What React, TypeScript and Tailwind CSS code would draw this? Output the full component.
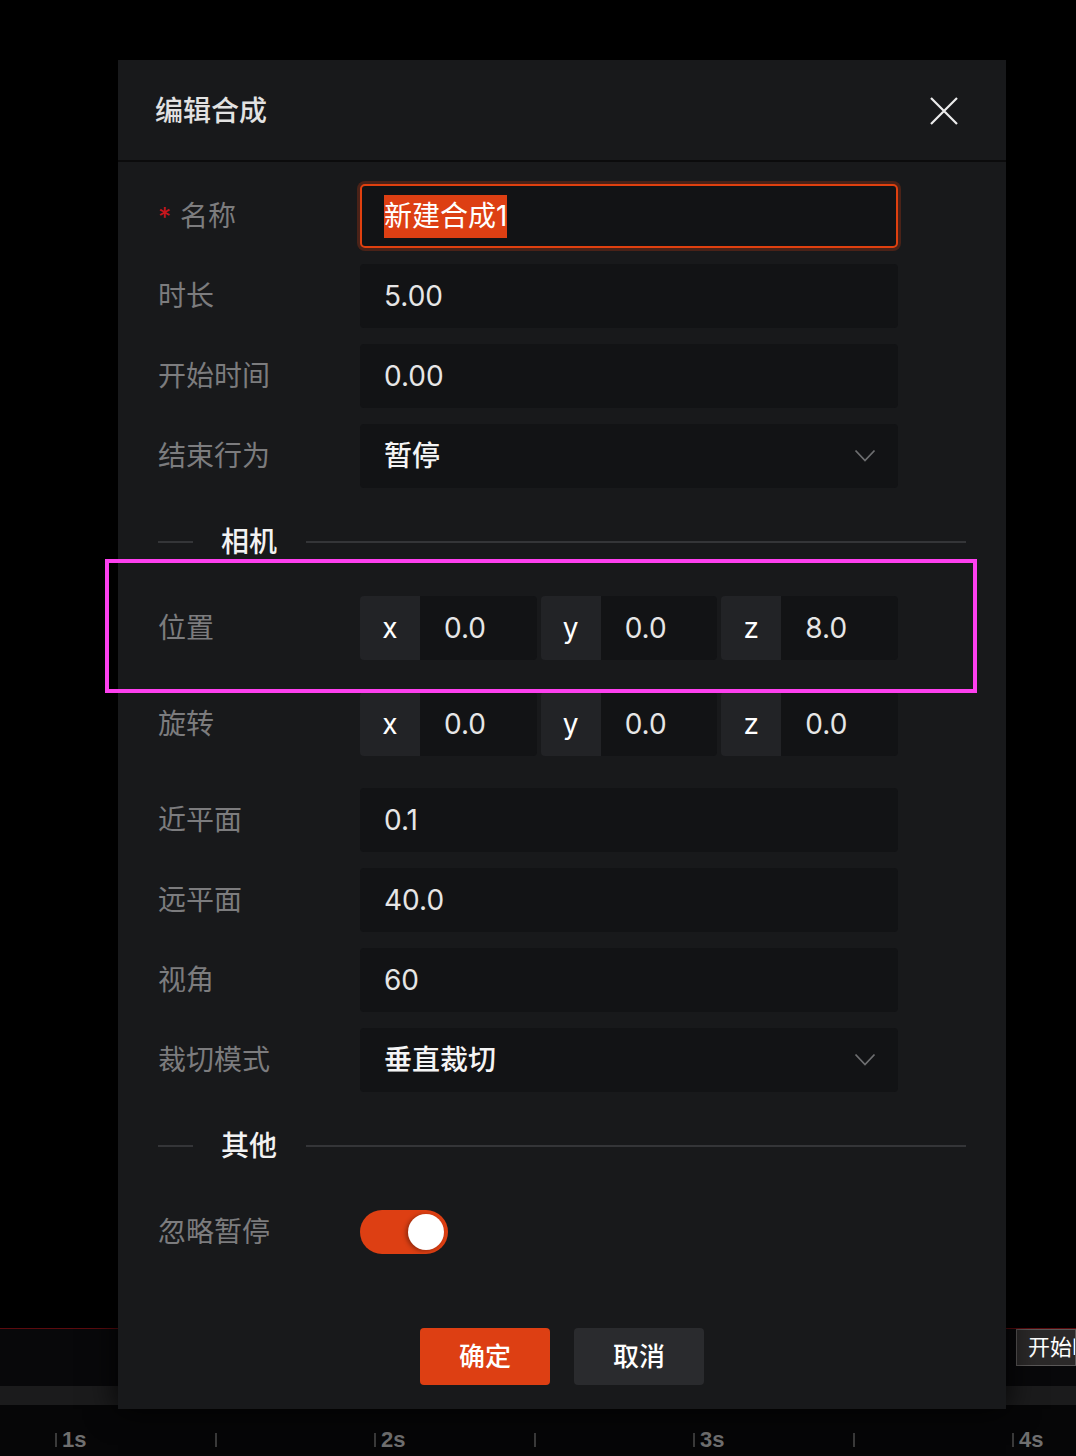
import React from "react";

const FONT = { fontFamily: 'Inter, "Noto Sans CJK SC", "Noto Sans", sans-serif' };

function Label({ children, required }: { children: React.ReactNode; required?: boolean }) {
  return (
    <div className="w-[202px] shrink-0 flex items-center text-[28px] text-[#7c7c7e]">
      {required && <span className="text-[#c8161d] mr-[9px] text-[26px] leading-none mt-[2px]">*</span>}
      <span>{children}</span>
    </div>
  );
}

function Row({ label, children, className = "", required }: { label: string; children: React.ReactNode; className?: string; required?: boolean }) {
  return (
    <div className={"flex h-16 items-center " + className}>
      <Label required={required}>{label}</Label>
      <div className="w-[538px] h-16">{children}</div>
    </div>
  );
}

function TextBox({ value }: { value: string }) {
  return (
    <div className="h-16 w-full rounded-[4px] bg-[#121315] flex items-center pl-6 text-[28px] text-[#e6e6e6]">{value}</div>
  );
}

function Chevron() {
  return (
    <svg width="22" height="14" viewBox="0 0 22 14" fill="none">
      <path d="M1.5 1.5 L11 11.5 L20.5 1.5" stroke="#6d6e70" strokeWidth="1.8" />
    </svg>
  );
}

function SelectBox({ value }: { value: string }) {
  return (
    <div className="h-16 w-full rounded-[4px] bg-[#121315] flex items-center justify-between pl-6 pr-[22px] text-[28px] text-[#f4f4f4] font-medium">
      <span>{value}</span>
      <Chevron />
    </div>
  );
}

function Vec3({ vals }: { vals: [string, string, string] }) {
  const axes = ["x", "y", "z"];
  return (
    <div className="grid grid-cols-3 gap-1 h-16">
      {axes.map((a, i) => (
        <div key={a} className="flex h-16 rounded-[4px] overflow-hidden">
          <div className="w-[60px] shrink-0 bg-[#222326] flex items-center justify-center text-[28px] text-white">{a}</div>
          <div className="flex-1 bg-[#121315] flex items-center pl-6 text-[28px] text-[#e6e6e6]">{vals[i]}</div>
        </div>
      ))}
    </div>
  );
}

function Divider({ text }: { text: string }) {
  return (
    <div className="h-[108px] flex items-center">
      <div className="w-[35px] h-[2px] bg-[#343538]" />
      <div className="ml-[28px] mr-[29px] text-[28px] text-[#f2f2f2] font-medium leading-none">{text}</div>
      <div className="flex-1 h-[2px] bg-[#343538]" />
    </div>
  );
}

export default function App() {
  const ticks = [0, 1, 2, 3, 4, 5, 6];
  const labels: Record<number, string> = { 0: "1s", 2: "2s", 4: "3s", 6: "4s" };
  return (
    <div className="relative w-[1076px] h-[1456px] bg-black overflow-hidden" style={FONT}>
      {/* background timeline */}
      <div className="h-[1328px]" />
      <div className="h-px bg-[#5c0b0e]" />
      <div className="h-[57px] bg-[#08080a] relative">
        <div className="absolute right-0 top-0 w-[60px] h-[37px] bg-[#2b2929] border border-[#5a5858] overflow-hidden whitespace-nowrap pl-[11px] text-[22px] leading-[35px] text-white">
          开始时间
        </div>
      </div>
      <div className="h-[19px] bg-[#1b1b1c]" />
      <div className="h-[51px] bg-[#060607] flex pl-[55px] pt-[24px]">
        {ticks.map((t) => (
          <div key={t} className="w-[159.5px] shrink-0 flex items-start">
            <div className="w-[2px] h-[14px] bg-[#3a3a3a] mt-[4px]" />
            {labels[t] && (
              <span className="ml-[5px] text-[22px] font-bold leading-none text-[#6f6f6f]" style={{ fontFamily: '"Liberation Sans", Arial, sans-serif' }}>
                {labels[t]}
              </span>
            )}
          </div>
        ))}
      </div>

      {/* dialog */}
      <div className="absolute left-[118px] top-[60px] w-[888px] h-[1349px] bg-[#18191b] shadow-[0_0_30px_rgba(0,0,0,0.9)] flex flex-col">
        <div className="h-[102px] shrink-0 flex items-center justify-between pl-[37px] pr-[48px] border-b-2 border-[#0b0b0c]">
          <div className="text-[28px] text-[#e2e2e2] font-medium mt-[2px]">编辑合成</div>
          <svg width="28" height="28" viewBox="0 0 28 28" fill="none" className="mt-[2px]">
            <path d="M1 1 L27 27 M27 1 L1 27" stroke="#ececec" strokeWidth="2.2" />
          </svg>
        </div>
        <div className="flex flex-col pl-10 pr-10 pt-[22px]">
          <Row label="名称" required>
            <div className="h-16 w-full rounded-[5px] border-2 border-[#e0400f] bg-[#121315] shadow-[0_0_0_3px_rgba(224,64,15,0.25)] flex items-center pl-[22px]">
              <span className="bg-[#dd3f13] text-white text-[28px] leading-[43px] px-0">新建合成1</span>
            </div>
          </Row>
          <Row label="时长" className="mt-4">
            <TextBox value="5.00" />
          </Row>
          <Row label="开始时间" className="mt-4">
            <TextBox value="0.00" />
          </Row>
          <Row label="结束行为" className="mt-4">
            <SelectBox value="暂停" />
          </Row>
          <Divider text="相机" />
          <Row label="位置">
            <Vec3 vals={["0.0", "0.0", "8.0"]} />
          </Row>
          <Row label="旋转" className="mt-8">
            <Vec3 vals={["0.0", "0.0", "0.0"]} />
          </Row>
          <Row label="近平面" className="mt-8">
            <TextBox value="0.1" />
          </Row>
          <Row label="远平面" className="mt-4">
            <TextBox value="40.0" />
          </Row>
          <Row label="视角" className="mt-4">
            <TextBox value="60" />
          </Row>
          <Row label="裁切模式" className="mt-4">
            <SelectBox value="垂直裁切" />
          </Row>
          <Divider text="其他" />
          <Row label="忽略暂停">
            <div className="h-16 flex items-center">
              <div className="w-[88px] h-[44px] rounded-full bg-[#dd3f13] flex items-center justify-end pr-[4px]">
                <div className="w-[36px] h-[36px] rounded-full bg-white shadow-[-2px_1px_4px_rgba(0,0,0,0.35)]" />
              </div>
            </div>
          </Row>
          <div className="mt-16 flex justify-center gap-6">
            <button className="w-[130px] h-[57px] rounded-[4px] bg-[#dd3f13] text-white text-[26px] font-medium">确定</button>
            <button className="w-[130px] h-[57px] rounded-[4px] bg-[#2a2b2e] text-white text-[26px] font-medium">取消</button>
          </div>
        </div>
      </div>

      {/* highlight overlay */}
      <div className="absolute left-[105px] top-[559px] w-[872px] h-[134px] border-4 border-[#fd40ef] pointer-events-none" />
    </div>
  );
}
